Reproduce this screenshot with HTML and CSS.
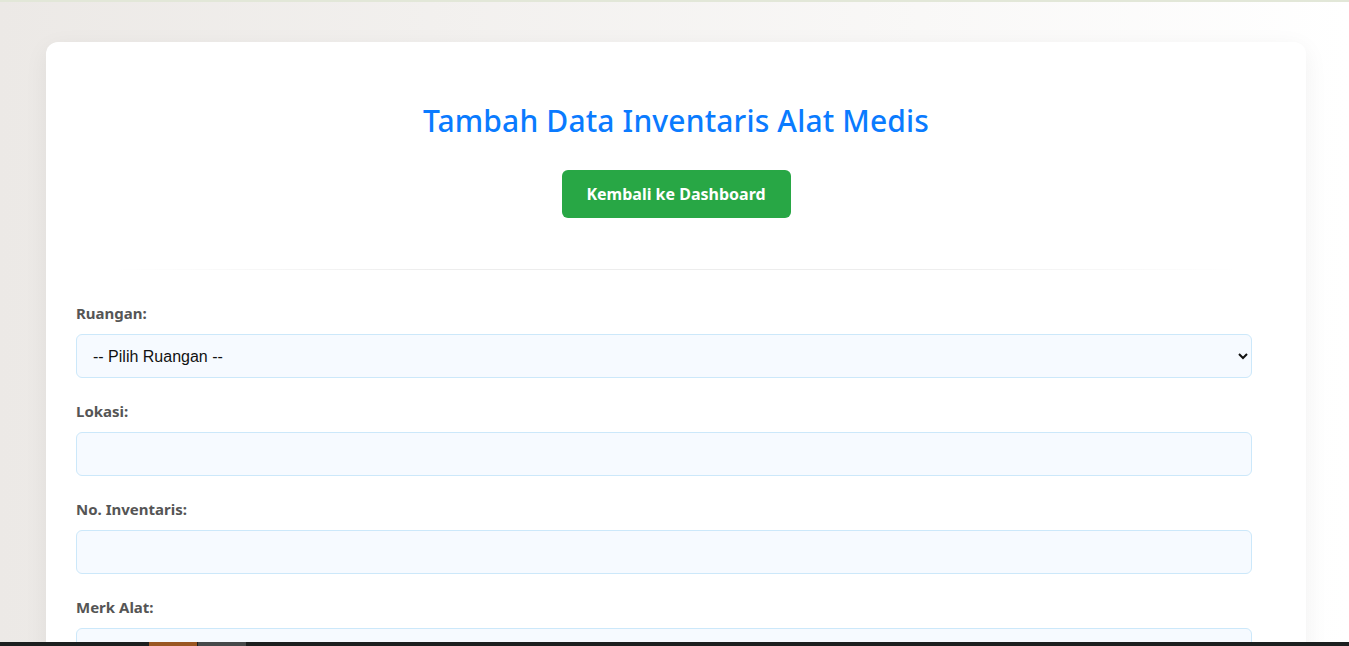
FILE: index.html
```html
<!DOCTYPE html>
<html lang="id">
<head>
<meta charset="utf-8">
<title>Tambah Data Inventaris Alat Medis</title>
<link rel="stylesheet" href="styles.css">
</head>
<body>
<div class="topline"></div>
<main class="card">
  <h1 class="title">Tambah Data Inventaris Alat Medis</h1>
  <div class="actions">
    <a class="btn-back" href="#">Kembali ke Dashboard</a>
  </div>
  <hr class="divider">
  <form class="form">
    <div class="group">
      <label class="label" for="ruangan">Ruangan:</label>
      <select class="field select" id="ruangan">
        <option>-- Pilih Ruangan --</option>
      </select>
    </div>
    <div class="group">
      <label class="label" for="lokasi">Lokasi:</label>
      <input class="field" id="lokasi" type="text">
    </div>
    <div class="group">
      <label class="label" for="noinv">No. Inventaris:</label>
      <input class="field" id="noinv" type="text">
    </div>
    <div class="group">
      <label class="label" for="merk">Merk Alat:</label>
      <input class="field" id="merk" type="text">
    </div>
  </form>
</main>
<div class="taskbar">
  <span class="task task-orange"></span>
  <span class="task task-grey"></span>
</div>
</body>
</html>
```

FILE: styles.css
```css
* { box-sizing: border-box; }

html, body {
  margin: 0;
  padding: 0;
}

body {
  background: linear-gradient(to right, #ece9e6, #ffffff);
  font-family: "Segoe UI", "Noto Sans", "Open Sans", sans-serif;
  min-height: 100vh;
}

.topline {
  height: 2px;
  background: #e2e7d8;
}

.card {
  max-width: 1260px;
  margin: 40px 43px 0 46px;
  background: #ffffff;
  border-radius: 12px;
  box-shadow: 0 6px 24px rgba(0, 0, 0, 0.06);
  padding: 53px 54px 40px 30px;
}

.title {
  margin: 0 -24px 0 0;
  text-align: center;
  color: #0a7bff;
  font-size: 30px;
  letter-spacing: 0.15px;
  font-weight: 500;
  line-height: 52px;
}

.actions {
  display: flex;
  justify-content: center;
  margin: 23px -24px 0 0;
}

.btn-back {
  display: inline-flex;
  align-items: center;
  justify-content: center;
  width: 229px;
  height: 48px;
  background: #28a745;
  color: #ffffff;
  border-radius: 6px;
  font-size: 16px;
  font-weight: 700;
  text-decoration: none;
}

.divider {
  border: 0;
  height: 1px;
  margin: 51px -24px 0 0;
  background: linear-gradient(to right, rgba(236,236,236,0) 3%, #ededed 30%, #ededed 70%, rgba(236,236,236,0) 97%);
}

.form {
  padding-top: 33px;
}

.group {
  margin-bottom: 23px;
}

.label {
  display: block;
  font-size: 15px;
  font-weight: 700;
  color: #555;
  line-height: 21px;
  margin-bottom: 10px;
}

.field {
  display: block;
  width: 100%;
  height: 44px;
  background: #f6faff;
  border: 1px solid #cce8fa;
  border-radius: 6px;
  padding: 0 14px;
  font-family: "Liberation Sans", Arial, sans-serif;
  font-size: 16px;
  color: #111;
  outline: none;
}

.select {
  padding-left: 12px;
  padding-right: 6px;
}

.taskbar {
  position: fixed;
  left: 0;
  right: 0;
  bottom: 0;
  height: 4px;
  background: #1c1f1f;
  display: flex;
  padding-left: 149px;
  gap: 1px;
}

.task {
  display: block;
  width: 48px;
  height: 4px;
}

.task-orange { background: #9a5622; }
.task-grey { background: #46494a; }
```
